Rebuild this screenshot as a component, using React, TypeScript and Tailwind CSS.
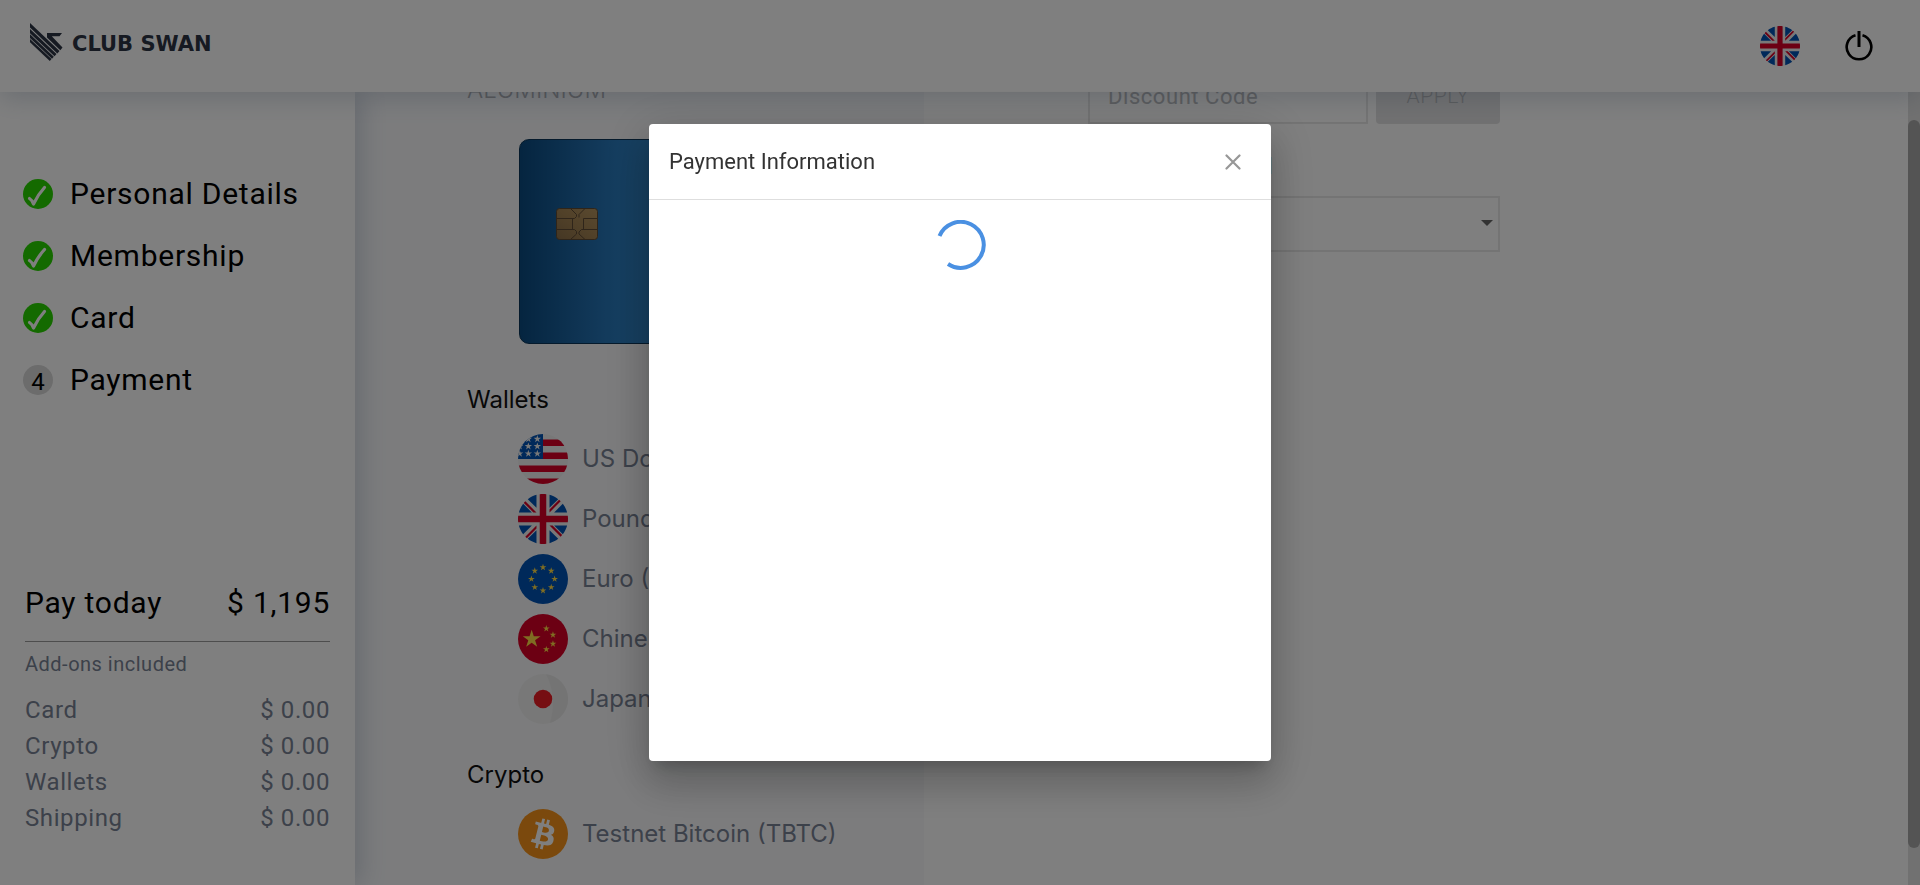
import type { ReactNode } from "react";

const starPoints = (cx: number, cy: number, r: number): string =>
  Array.from({ length: 10 }, (_, i) => {
    const radius = i % 2 === 0 ? r : r * 0.382;
    const angle = (Math.PI / 5) * i - Math.PI / 2;
    return `${(cx + radius * Math.cos(angle)).toFixed(1)},${(cy + radius * Math.sin(angle)).toFixed(1)}`;
  }).join(" ");

const Star = ({ x, y, r, fill }: { x: number; y: number; r: number; fill: string }) => (
  <polygon points={starPoints(x, y, r)} fill={fill} />
);

function FlagGB({ className }: { className: string }) {
  return (
    <svg viewBox="0 0 512 512" className={className} aria-hidden="true">
      <circle cx="256" cy="256" r="256" fill="#f0f0f0" />
      <path
        fill="#0052b4"
        d="M52.92 100.142c-20.109 26.163-35.272 56.318-44.101 89.077h133.178L52.92 100.142zM503.181 189.219c-8.829-32.758-23.993-62.913-44.101-89.076l-89.075 89.076h133.176zM8.819 322.784c8.83 32.758 23.993 62.913 44.101 89.075l89.074-89.075H8.819zM411.858 52.921c-26.163-20.109-56.317-35.272-89.076-44.102v133.177l89.076-89.075zM100.142 459.079c26.163 20.109 56.318 35.272 89.076 44.102V370.005l-89.076 89.074zM189.217 8.819c-32.758 8.83-62.913 23.993-89.075 44.101l89.075 89.075V8.819zM322.783 503.181c32.758-8.83 62.913-23.993 89.075-44.101l-89.075-89.075v133.176zM370.005 322.784l89.075 89.076c20.108-26.162 35.272-56.318 44.101-89.076H370.005z"
      />
      <path
        fill="#d80027"
        d="M509.833 222.609h-220.44V2.167C278.461.744 267.317 0 256 0c-11.319 0-22.461.744-33.391 2.167v220.44H2.167C.744 233.539 0 244.683 0 256c0 11.319.744 22.461 2.167 33.391h220.44v220.442C233.539 511.256 244.681 512 256 512c11.317 0 22.461-.743 33.391-2.167v-220.44h220.442C511.256 278.461 512 267.319 512 256c0-11.317-.744-22.461-2.167-33.391zM322.783 322.784L437.019 437.02c5.254-5.252 10.266-10.743 15.048-16.435l-97.802-97.802h-31.482zM189.217 322.784h-.002L74.98 437.019c5.252 5.254 10.743 10.266 16.435 15.048l97.802-97.804v-31.479zM189.217 189.219v-.002L74.981 74.98c-5.254 5.252-10.266 10.743-15.048 16.435l97.803 97.803h31.481zM322.783 189.219L437.02 74.981c-5.252-5.254-10.743-10.266-16.435-15.047l-97.802 97.803v31.482z"
      />
    </svg>
  );
}

function FlagUS({ className }: { className: string }) {
  return (
    <svg viewBox="0 0 512 512" className={className} aria-hidden="true">
      <clipPath id="us-round">
        <circle cx="256" cy="256" r="256" />
      </clipPath>
      <g clipPath="url(#us-round)">
        <rect width="512" height="512" fill="#f0f0f0" />
        <path
          fill="#d80027"
          d="M244.87 256H512v-66.783H244.87zM244.87 122.435H512V55.652H244.87zM0 512h512v-55.652H0zM0 389.565h512v-66.783H0z"
        />
        <rect width="256" height="256" fill="#0052b4" />
        {[51, 126, 201].map((y) =>
          [17, 106, 198].map((x) => <Star key={`${x}-${y}`} x={x} y={y} r={40} fill="#f0f0f0" />),
        )}
      </g>
    </svg>
  );
}

function FlagEU({ className }: { className: string }) {
  return (
    <svg viewBox="0 0 512 512" className={className} aria-hidden="true">
      <circle cx="256" cy="256" r="256" fill="#0052b4" />
      {Array.from({ length: 8 }, (_, i) => (
        <Star
          key={i}
          x={256 + 119 * Math.cos((Math.PI / 4) * i)}
          y={256 + 119 * Math.sin((Math.PI / 4) * i)}
          r={36}
          fill="#ffda44"
        />
      ))}
    </svg>
  );
}

function FlagCN({ className }: { className: string }) {
  return (
    <svg viewBox="0 0 512 512" className={className} aria-hidden="true">
      <circle cx="256" cy="256" r="256" fill="#d80027" />
      <Star x={140} y={258} r={96} fill="#ffda44" />
      <Star x={290} y={149} r={36} fill="#ffda44" />
      <Star x={358} y={213} r={36} fill="#ffda44" />
      <Star x={358} y={305} r={36} fill="#ffda44" />
      <Star x={290} y={363} r={36} fill="#ffda44" />
    </svg>
  );
}

function FlagJP({ className }: { className: string }) {
  return (
    <svg viewBox="0 0 512 512" className={className} aria-hidden="true">
      <circle cx="256" cy="256" r="256" fill="#f1f1f1" />
      <path d="M285 2a256 256 0 0 1 40 501C372 370 372 150 285 2z" fill="#e9e9e9" />
      <circle cx="256" cy="256" r="95" fill="#ed1c24" />
    </svg>
  );
}

function Bitcoin({ className }: { className: string }) {
  return (
    <svg viewBox="0 0 32 32" className={className} aria-hidden="true">
      <circle cx="16" cy="16" r="16" fill="#f7931a" />
      <path
        fill="#fff"
        d="M23.189 14.02c.314-2.096-1.283-3.223-3.465-3.975l.708-2.84-1.728-.43-.69 2.765c-.454-.114-.92-.22-1.385-.326l.695-2.783L15.596 6l-.708 2.839c-.376-.086-.746-.17-1.104-.26l.002-.009-2.384-.595-.46 1.846s1.283.294 1.256.312c.7.175.826.638.805 1.006l-.806 3.235c.048.012.11.03.18.057l-.183-.045-1.13 4.532c-.086.212-.303.531-.793.41.018.025-1.256-.313-1.256-.313l-.858 1.978 2.25.561c.418.105.828.215 1.231.318l-.715 2.872 1.727.43.708-2.84c.472.127.93.245 1.378.357l-.706 2.828 1.728.43.715-2.866c2.948.558 5.164.333 6.097-2.333.752-2.146-.037-3.385-1.588-4.192 1.13-.26 1.98-1.003 2.207-2.538zm-3.95 5.538c-.533 2.147-4.148.986-5.32.695l.95-3.805c1.172.293 4.929.872 4.37 3.11zm.535-5.569c-.487 1.953-3.495.96-4.47.717l.86-3.45c.975.243 4.118.696 3.61 2.733z"
      />
    </svg>
  );
}

function Chip() {
  return (
    <svg viewBox="0 0 42 32" className="h-8 w-[42px]" fill="none" stroke="#5f4a34" strokeWidth="1" aria-hidden="true">
      <defs>
        <linearGradient id="chip" x1="0" y1="1" x2="1" y2="0">
          <stop offset="0" stopColor="#8a6e48" />
          <stop offset="0.5" stopColor="#a28252" />
          <stop offset="1" stopColor="#b4935f" />
        </linearGradient>
      </defs>
      <rect x="0.5" y="0.5" width="41" height="31" rx="3" fill="url(#chip)" />
      <path d="M.5 10.500H18.500L20.500 8.500V6.500L14.500 .5M.5 21.500H18.500L20.500 23.500V26L14.500 31.500M16.500 10.500v11M41.500 10.500H27.500v11M41.500 21.500H25.500L23 24v2L29 31.500M23 9.500V6.500L29 .5" />
    </svg>
  );
}

const TickBadge = () => (
  <svg viewBox="0 0 30 30" className="size-[30px] shrink-0" aria-hidden="true">
    <circle cx="15" cy="15" r="15" fill="#28d400" />
    <path d="M6.500 19.500Q9 21 10.500 25Q15 15.500 21.500 8.500" fill="none" stroke="#fff" strokeWidth="3.2" strokeLinecap="round" strokeLinejoin="round" />
  </svg>
);

const Logo = () => (
  <a href="#home" className="flex items-center gap-[9px] text-[#2c3444]" aria-label="Club Swan">
    <svg viewBox="0 0 33 38" className="h-[38px] w-[33px]" fill="currentColor" aria-hidden="true">
      <path d="M17 10H32L29.500 13.200H21.800L32.500 24.500L30.300 27.200L17 14.500z" />
      <path d="M0 0L29.500 28L27.300 30.500L0 4.600z" />
      <path d="M0 6L26.500 31L24.500 33.200L0 10.200z" />
      <path d="M0 11.300L23.800 33.700L22 35.800L0 15z" />
      <path d="M0 16L21.500 36L19.800 38L0 19.200z" />
    </svg>
    <span className="pt-1 font-['DejaVu_Sans'] text-[21px] leading-6 font-bold">CLUB SWAN</span>
  </a>
);

const steps = ["Personal Details", "Membership", "Card", "Payment"];
const addons = ["Card", "Crypto", "Wallets", "Shipping"];
const wallets: { name: string; Flag: (p: { className: string }) => ReactNode }[] = [
  { name: "US Dollar (USD)", Flag: FlagUS },
  { name: "Pound Sterling (GBP)", Flag: FlagGB },
  { name: "Euro (EUR)", Flag: FlagEU },
  { name: "Chinese Yuan (CNY)", Flag: FlagCN },
  { name: "Japanese Yen (JPY)", Flag: FlagJP },
];

export default function App() {
  return (
    <div className="flex h-screen flex-col overflow-hidden bg-white font-['Roboto',sans-serif] text-black">
      <header className="relative z-10 flex h-[92px] shrink-0 items-center justify-between bg-white pr-[46px] pl-[30px] shadow-[0_6px_24px_rgba(40,70,110,0.2)]">
        <div className="pb-2">
          <Logo />
        </div>
        <div className="flex items-center gap-[44px]">
          <button type="button" aria-label="Language">
            <FlagGB className="size-10" />
          </button>
          <button type="button" aria-label="Log out">
            <svg viewBox="0 0 30 32" className="h-8 w-[30px]" fill="none" stroke="#000" strokeWidth="2.6" aria-hidden="true">
              <path d="M11.500 5.200A12.300 12.300 0 1 0 18.500 5.200" />
              <path d="M15 1v16" strokeWidth="3" />
            </svg>
          </button>
        </div>
      </header>

      <div className="flex min-h-0 flex-1">
        <aside className="relative z-[1] flex w-[355px] shrink-0 flex-col justify-between bg-white pt-[82px] pb-[49px] shadow-[6px_0_24px_rgba(40,70,110,0.2)]">
          <ol className="flex flex-col gap-[22px] pl-[23px]">
            {steps.map((step, i) => (
              <li key={step} className="flex h-10 items-center gap-[17px] text-[30px] leading-10 tracking-wide">
                {i < 3 ? (
                  <TickBadge />
                ) : (
                  <span className="flex size-[30px] shrink-0 items-center justify-center rounded-full bg-[#d8d8d8] pt-1 text-2xl tracking-normal">
                    4
                  </span>
                )}
                {step}
              </li>
            ))}
          </ol>
          <section className="px-[25px]">
            <div className="flex justify-between text-[30px] leading-10 tracking-wide">
              <span>Pay today</span>
              <span>$ 1,195</span>
            </div>
            <hr className="mt-[18px] border-t border-[#9a9a9a]" />
            <p className="mt-[10px] mb-4 text-xl leading-6 tracking-wide text-[#788294]">Add-ons included</p>
            <dl className="text-2xl leading-9 tracking-wide text-[#788294]">
              {addons.map((name) => (
                <div key={name} className="flex justify-between">
                  <dt>{name}</dt>
                  <dd>$ 0.00</dd>
                </div>
              ))}
            </dl>
          </section>
        </aside>

        <main className="flex min-w-0 flex-1 items-start overflow-hidden">
          <section className="h-full w-[569px] shrink-0 bg-[#f8f9fb] pl-[112px] font-['Inter',sans-serif]">
            <h2 className="-mt-[18px] text-2xl leading-8 font-light text-[#aeb0b4]">ALUMINIUM</h2>
            <div className="mt-[33px] ml-[52px] h-[205px] w-[325px] rounded-[10px] border border-[#0b3558] bg-linear-to-r from-[#0a4a80] via-[#2a7cc0] via-30% to-[#4f9ccc] pt-[68px] pl-[36px]">
              <Chip />
            </div>
            <h2 className="mt-10 text-2xl leading-8 text-[#111]">Wallets</h2>
            <ul className="mt-[18px] ml-[51px] flex flex-col gap-[10px]">
              {wallets.map(({ name, Flag }) => (
                <li key={name} className="flex items-center gap-[14px] text-2xl leading-8 text-[#788294]">
                  <Flag className="size-[50px]" />
                  {name}
                </li>
              ))}
            </ul>
            <h2 className="mt-[35px] text-2xl leading-8 text-[#111]">Crypto</h2>
            <div className="mt-[18px] ml-[51px] flex items-center gap-[14px] text-2xl leading-8 text-[#788294]">
              <Bitcoin className="size-[50px]" />
              Testnet Bitcoin (TBTC)
            </div>
          </section>

          <section className="min-w-0 flex-1 pl-[164px]">
            <div className="-mt-6 flex h-[56px] w-[412px] gap-2">
              <input
                aria-label="Discount code"
                placeholder="Discount Code"
                className="min-w-0 flex-1 border-2 border-[#e8e8e8] bg-white px-[18px] text-[22px] tracking-wide placeholder:text-[#bbbdc0]"
              />
              <button
                type="button"
                disabled
                className="w-[124px] rounded-[4px] bg-[#e2e2e3] pt-[2px] text-[21px] font-light tracking-wide text-[#b6b8bb]"
              >
                APPLY
              </button>
            </div>
            <label htmlFor="method" className="mt-[26px] block font-['Inter',sans-serif] text-[23px] leading-8">
              Payment Method
            </label>
            <div className="relative mt-[14px] w-[412px]">
              <select id="method" className="h-14 w-full appearance-none border-2 border-[#e8e8e8] bg-white px-4 text-xl">
                <option value=""></option>
              </select>
              <svg viewBox="0 0 12 6" className="pointer-events-none absolute top-6 right-[7px] h-[6px] w-3" aria-hidden="true">
                <path d="M0 0h12L6 6z" fill="#666" />
              </svg>
            </div>
          </section>

          <div className="h-full w-3 shrink-0 bg-[#e2e2e2] pt-7" aria-hidden="true">
            <div className="h-[95.500%] max-h-[728px] rounded-full bg-[#a9a9a9]" />
          </div>
        </main>
      </div>

      <div className="fixed inset-0 z-50 flex items-start justify-center bg-black/50 pt-[124px]">
        <div
          role="dialog"
          aria-modal="true"
          aria-labelledby="dialog-title"
          className="flex h-[637px] w-[622px] flex-col rounded-[4px] bg-white shadow-[0_11px_15px_-7px_rgba(0,0,0,0.2),0_24px_38px_3px_rgba(0,0,0,0.14),0_9px_46px_8px_rgba(0,0,0,0.12)]"
        >
          <div className="flex h-[76px] shrink-0 items-center justify-between border-b border-[#dedede] px-5">
            <h1 id="dialog-title" className="text-[22px] leading-7 text-[#333]">
              Payment Information
            </h1>
            <button type="button" aria-label="Close" className="p-[10px]">
              <svg viewBox="0 0 16 16" className="size-4" stroke="#979797" strokeWidth="2.2" strokeLinecap="round" aria-hidden="true">
                <path d="M1.500 1.500l13 13M14.500 1.500l-13 13" />
              </svg>
            </button>
          </div>
          <div className="flex justify-center pt-5 pl-[2px]">
            <svg viewBox="0 0 50 50" className="size-[50px]" fill="none" stroke="#4a90e2" strokeWidth="4" role="status" aria-label="Loading">
              <path d="M3.500 16A23 23 0 1 1 12 44" />
            </svg>
          </div>
        </div>
      </div>
    </div>
  );
}
